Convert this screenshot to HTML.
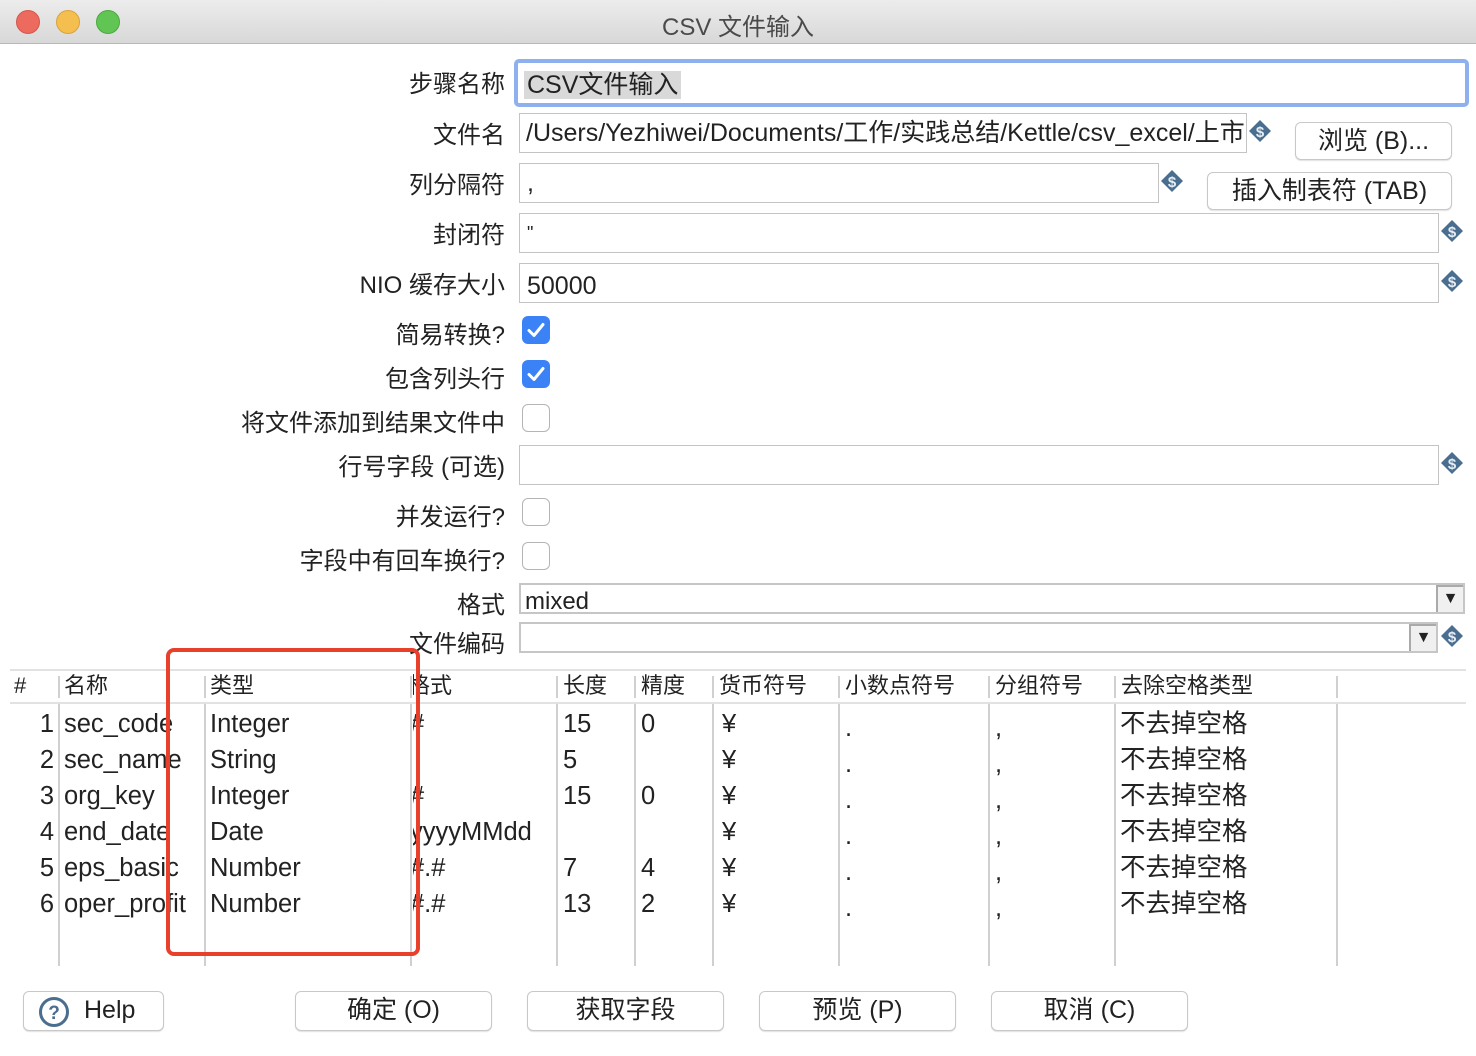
<!DOCTYPE html>
<html><head><meta charset="utf-8"><style>
*{margin:0;padding:0;box-sizing:border-box}
body{width:1476px;height:1056px;background:#fff;position:relative;overflow:hidden;font-family:"Liberation Sans","Noto Sans CJK SC",sans-serif;color:#222}
.a{position:absolute}
.tb{left:0;top:0;width:1476px;height:44px;background:linear-gradient(#ececec,#d8d8d8);border-bottom:1px solid #b8b8b8}
.dot{width:24px;height:24px;border-radius:50%;top:10px}
.lbl{right:971px;font-size:24px;text-align:right;white-space:nowrap;color:#222}
.in{border:1px solid #c4c4c4;background:#fff;font-size:25px;line-height:38px;padding-left:7px;white-space:nowrap;overflow:hidden}
.btn{border:1px solid #c8c8c8;border-radius:6px;background:#fff;box-shadow:0 1px 1px rgba(0,0,0,.12);font-size:25px;text-align:center;line-height:36px;color:#222}
.cb{width:28px;height:28px;border-radius:6px}
.cb.on{background:#3b82f6}
.cb.off{border:1px solid #b5b5b5;background:#fff}
.vl{width:2px;background:#d0d0d0}
.hd{font-size:22px;top:673px;line-height:26px}
.c{font-size:25.5px;line-height:36px;white-space:nowrap;overflow:hidden}
.arr{background:#f0f0f0;border-left:2px solid #aaa;border-top:2px solid #aaa;font-size:16px;text-align:center;line-height:24px}
</style></head><body>
<div class="a tb"></div>
<div class="a dot" style="left:16px;background:#ec6a5e;border:1px solid #d4574c"></div>
<div class="a dot" style="left:56px;background:#f5bf4f;border:1px solid #d9a23a"></div>
<div class="a dot" style="left:96px;background:#61c554;border:1px solid #4ba83f"></div>
<div class="a" style="left:0;width:1476px;top:7px;text-align:center;font-size:24px;color:#4a4a4a">CSV 文件输入</div>

<svg width="0" height="0" style="position:absolute"><defs><g id="dl"><path d="M11 0L22 11L11 22L0 11Z" fill="#4a6e8f"/><text x="11" y="17" font-size="15" font-weight="bold" fill="#e6eef5" text-anchor="middle" font-family="Liberation Sans">$</text></g></defs></svg>

<div class="a lbl" style="top:64px">步骤名称</div>
<div class="a" style="left:514px;top:59px;width:955px;height:48px;border:4px solid #8fb0ee;border-radius:5px;background:#fff"></div>
<div class="a" style="left:524px;top:68px;width:940px;height:34px;font-size:25px;line-height:34px"><span style="background:#d9d9d9;padding:0 3px">CSV文件输入</span></div>

<div class="a lbl" style="top:115px">文件名</div>
<div class="a in" style="left:519px;top:113px;width:728px;height:40px;padding-left:6px">/Users/Yezhiwei/Documents/工作/实践总结/Kettle/csv_excel/上市</div>
<svg class="a" style="left:1249px;top:120px" width="22" height="22"><use href="#dl"/></svg>
<div class="a btn" style="left:1295px;top:122px;width:157px;height:38px">浏览 (B)...</div>

<div class="a lbl" style="top:165px">列分隔符</div>
<div class="a in" style="left:519px;top:163px;width:640px;height:40px">,</div>
<svg class="a" style="left:1161px;top:170px" width="22" height="22"><use href="#dl"/></svg>
<div class="a btn" style="left:1207px;top:172px;width:245px;height:38px">插入制表符 (TAB)</div>

<div class="a lbl" style="top:215px">封闭符</div>
<div class="a in" style="left:519px;top:213px;width:920px;height:40px;font-size:18px">"</div>
<svg class="a" style="left:1441px;top:220px" width="22" height="22"><use href="#dl"/></svg>

<div class="a lbl" style="top:265px">NIO 缓存大小</div>
<div class="a in" style="left:519px;top:263px;width:920px;height:40px;line-height:44px">50000</div>
<svg class="a" style="left:1441px;top:270px" width="22" height="22"><use href="#dl"/></svg>

<div class="a lbl" style="top:315px">简易转换?</div>
<div class="a cb on" style="left:522px;top:316px"><svg width="28" height="28"><path d="M7 14.5L12 19.5L21 8.5" stroke="#fff" stroke-width="3" fill="none" stroke-linecap="round" stroke-linejoin="round"/></svg></div>
<div class="a lbl" style="top:359px">包含列头行</div>
<div class="a cb on" style="left:522px;top:360px"><svg width="28" height="28"><path d="M7 14.5L12 19.5L21 8.5" stroke="#fff" stroke-width="3" fill="none" stroke-linecap="round" stroke-linejoin="round"/></svg></div>
<div class="a lbl" style="top:403px">将文件添加到结果文件中</div>
<div class="a cb off" style="left:522px;top:404px"></div>

<div class="a lbl" style="top:447px">行号字段 (可选)</div>
<div class="a in" style="left:519px;top:445px;width:920px;height:40px"></div>
<svg class="a" style="left:1441px;top:452px" width="22" height="22"><use href="#dl"/></svg>

<div class="a lbl" style="top:497px">并发运行?</div>
<div class="a cb off" style="left:522px;top:498px"></div>
<div class="a lbl" style="top:541px">字段中有回车换行?</div>
<div class="a cb off" style="left:522px;top:542px"></div>

<div class="a lbl" style="top:585px">格式</div>
<div class="a" style="left:519px;top:583px;width:946px;height:31px;border:2px solid #c6c6c6;font-size:24px;line-height:34px;padding-left:4px">mixed</div>
<div class="a arr" style="left:1436px;top:585px;width:27px;height:27px">▼</div>
<div class="a lbl" style="top:624px">文件编码</div>
<div class="a" style="left:519px;top:622px;width:919px;height:31px;border:2px solid #c6c6c6"></div>
<div class="a arr" style="left:1409px;top:624px;width:27px;height:27px">▼</div>
<svg class="a" style="left:1441px;top:625px" width="22" height="22"><use href="#dl"/></svg>

<!-- table -->
<div class="a" style="left:10px;top:669px;width:1456px;height:2px;background:#e2e2e2"></div>
<div class="a" style="left:10px;top:702px;width:1456px;height:2px;background:#e2e2e2"></div>
<div class="a hd" style="left:14px">#</div>
<div class="a hd" style="left:64px">名称</div>
<div class="a hd" style="left:210px">类型</div>
<div class="a" style="left:413px;top:673px;width:140px;overflow:hidden;height:28px"><div class="hd" style="margin-left:-5px;position:relative;top:0">格式</div></div>
<div class="a hd" style="left:563px">长度</div>
<div class="a hd" style="left:641px">精度</div>
<div class="a hd" style="left:719px">货币符号</div>
<div class="a hd" style="left:845px">小数点符号</div>
<div class="a hd" style="left:995px">分组符号</div>
<div class="a hd" style="left:1121px">去除空格类型</div>
<div class="a vl" style="left:58px;top:676px;height:22px"></div>
<div class="a vl" style="left:204px;top:676px;height:22px"></div>
<div class="a vl" style="left:410px;top:676px;height:22px"></div>
<div class="a vl" style="left:556px;top:676px;height:22px"></div>
<div class="a vl" style="left:634px;top:676px;height:22px"></div>
<div class="a vl" style="left:712px;top:676px;height:22px"></div>
<div class="a vl" style="left:838px;top:676px;height:22px"></div>
<div class="a vl" style="left:988px;top:676px;height:22px"></div>
<div class="a vl" style="left:1114px;top:676px;height:22px"></div>
<div class="a vl" style="left:1336px;top:676px;height:22px"></div>
<div class="a vl" style="left:58px;top:704px;height:262px"></div>
<div class="a vl" style="left:204px;top:704px;height:262px"></div>
<div class="a vl" style="left:410px;top:704px;height:262px"></div>
<div class="a vl" style="left:556px;top:704px;height:262px"></div>
<div class="a vl" style="left:634px;top:704px;height:262px"></div>
<div class="a vl" style="left:712px;top:704px;height:262px"></div>
<div class="a vl" style="left:838px;top:704px;height:262px"></div>
<div class="a vl" style="left:988px;top:704px;height:262px"></div>
<div class="a vl" style="left:1114px;top:704px;height:262px"></div>
<div class="a vl" style="left:1336px;top:704px;height:262px"></div>

<div class="a c" style="left:10px;top:706px;width:44px;text-align:right">1<br>2<br>3<br>4<br>5<br>6</div>
<div class="a c" style="left:64px;top:706px;width:140px">sec_code<br>sec_name<br>org_key<br>end_date<br>eps_basic<br>oper_profit</div>
<div class="a c" style="left:210px;top:706px;width:198px">Integer<br>String<br>Integer<br>Date<br>Number<br>Number</div>
<div class="a c" style="left:413px;top:706px;width:142px"><div style="margin-left:-3px">#<br>&nbsp;<br>#<br>yyyyMMdd<br>#.#<br>#.#</div></div>
<div class="a c" style="left:563px;top:706px;width:70px">15<br>5<br>15<br>&nbsp;<br>7<br>13</div>
<div class="a c" style="left:641px;top:706px;width:70px">0<br>&nbsp;<br>0<br>&nbsp;<br>4<br>2</div>
<div class="a c" style="left:722px;top:706px;width:110px">¥<br>¥<br>¥<br>¥<br>¥<br>¥</div>
<div class="a c" style="left:845px;top:710px;width:130px">.<br>.<br>.<br>.<br>.<br>.</div>
<div class="a c" style="left:995px;top:710px;width:110px">,<br>,<br>,<br>,<br>,<br>,</div>
<div class="a c" style="left:1120px;top:706px;width:210px">不去掉空格<br>不去掉空格<br>不去掉空格<br>不去掉空格<br>不去掉空格<br>不去掉空格</div>

<div class="a" style="left:166px;top:648px;width:254px;height:308px;border:4px solid #e8402b;border-radius:8px"></div>

<div class="a btn" style="left:23px;top:991px;width:141px;height:40px;text-align:left;padding-left:60px">Help</div>
<svg class="a" style="left:38px;top:996px" width="32" height="32"><circle cx="16" cy="16" r="13.5" fill="#fff" stroke="#4a6e8f" stroke-width="3"/><text x="16" y="23" font-size="19" font-weight="bold" fill="#4a6e8f" text-anchor="middle" font-family="Liberation Sans">?</text></svg>
<div class="a btn" style="left:295px;top:991px;width:197px;height:40px">确定 (O)</div>
<div class="a btn" style="left:527px;top:991px;width:197px;height:40px">获取字段</div>
<div class="a btn" style="left:759px;top:991px;width:197px;height:40px">预览 (P)</div>
<div class="a btn" style="left:991px;top:991px;width:197px;height:40px">取消 (C)</div>
</body></html>
